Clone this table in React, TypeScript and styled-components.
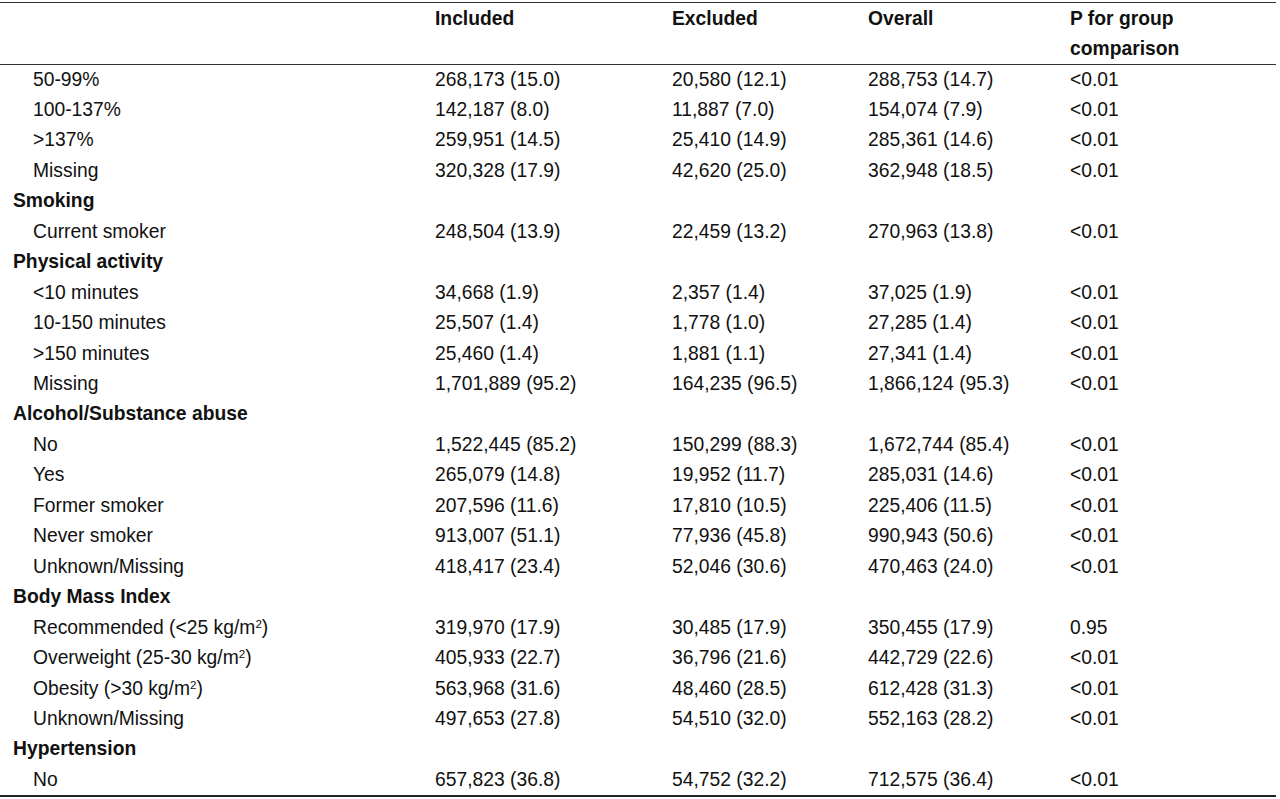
import React from "react";
import styled, { createGlobalStyle } from "styled-components";

const Global = createGlobalStyle`
  html, body { margin: 0; padding: 0; background: #fff; }
  body { font-family: "Liberation Sans", Arial, sans-serif; color: #111; }
`;

const Table = styled.div`
  width: 1276px;
  margin-top: 1.5px;
  border-top: 1.5px solid #333;
  border-bottom: 2px solid #222;
  font-size: 19.3px;
`;

const Grid = styled.div<{ $head?: boolean }>`
  display: grid;
  grid-template-columns: 435px 237px 196px 202px 1fr;
  line-height: ${(p) => (p.$head ? "30px" : "30.45px")};
  ${(p) => (p.$head ? "border-bottom: 1.2px solid #333; font-weight: bold; padding-top: 1px;" : "")}
`;

const HeadCell = styled.div`
  padding: 0;
  white-space: pre-line;
`;

const Label = styled.div<{ $group?: boolean }>`
  padding-left: ${(p) => (p.$group ? "13px" : "33px")};
  font-weight: ${(p) => (p.$group ? "bold" : "normal")};
  white-space: nowrap;
`;

const Cell = styled.div`
  white-space: nowrap;
`;

const Sup = styled.sup`
  font-size: 0.6em;
  line-height: 0;
  vertical-align: 0.55em;
`;

type Row = { label: React.ReactNode; group?: boolean; v?: [string, string, string, string] };

const kg = (pre: string) => (
  <>
    {pre}
    <Sup>2</Sup>)
  </>
);

const rows: Row[] = [
  { label: "50-99%", v: ["268,173 (15.0)", "20,580 (12.1)", "288,753 (14.7)", "<0.01"] },
  { label: "100-137%", v: ["142,187 (8.0)", "11,887 (7.0)", "154,074 (7.9)", "<0.01"] },
  { label: ">137%", v: ["259,951 (14.5)", "25,410 (14.9)", "285,361 (14.6)", "<0.01"] },
  { label: "Missing", v: ["320,328 (17.9)", "42,620 (25.0)", "362,948 (18.5)", "<0.01"] },
  { label: "Smoking", group: true },
  { label: "Current smoker", v: ["248,504 (13.9)", "22,459 (13.2)", "270,963 (13.8)", "<0.01"] },
  { label: "Physical activity", group: true },
  { label: "<10 minutes", v: ["34,668 (1.9)", "2,357 (1.4)", "37,025 (1.9)", "<0.01"] },
  { label: "10-150 minutes", v: ["25,507 (1.4)", "1,778 (1.0)", "27,285 (1.4)", "<0.01"] },
  { label: ">150 minutes", v: ["25,460 (1.4)", "1,881 (1.1)", "27,341 (1.4)", "<0.01"] },
  { label: "Missing", v: ["1,701,889 (95.2)", "164,235 (96.5)", "1,866,124 (95.3)", "<0.01"] },
  { label: "Alcohol/Substance abuse", group: true },
  { label: "No", v: ["1,522,445 (85.2)", "150,299 (88.3)", "1,672,744 (85.4)", "<0.01"] },
  { label: "Yes", v: ["265,079 (14.8)", "19,952 (11.7)", "285,031 (14.6)", "<0.01"] },
  { label: "Former smoker", v: ["207,596 (11.6)", "17,810 (10.5)", "225,406 (11.5)", "<0.01"] },
  { label: "Never smoker", v: ["913,007 (51.1)", "77,936 (45.8)", "990,943 (50.6)", "<0.01"] },
  { label: "Unknown/Missing", v: ["418,417 (23.4)", "52,046 (30.6)", "470,463 (24.0)", "<0.01"] },
  { label: "Body Mass Index", group: true },
  { label: kg("Recommended (<25 kg/m"), v: ["319,970 (17.9)", "30,485 (17.9)", "350,455 (17.9)", "0.95"] },
  { label: kg("Overweight (25-30 kg/m"), v: ["405,933 (22.7)", "36,796 (21.6)", "442,729 (22.6)", "<0.01"] },
  { label: kg("Obesity (>30 kg/m"), v: ["563,968 (31.6)", "48,460 (28.5)", "612,428 (31.3)", "<0.01"] },
  { label: "Unknown/Missing", v: ["497,653 (27.8)", "54,510 (32.0)", "552,163 (28.2)", "<0.01"] },
  { label: "Hypertension", group: true },
  { label: "No", v: ["657,823 (36.8)", "54,752 (32.2)", "712,575 (36.4)", "<0.01"] },
];

export default function App() {
  return (
    <>
      <Global />
      <Table>
        <Grid $head>
          <HeadCell />
          <HeadCell>Included</HeadCell>
          <HeadCell>Excluded</HeadCell>
          <HeadCell>Overall</HeadCell>
          <HeadCell>{"P for group\ncomparison"}</HeadCell>
        </Grid>
        {rows.map((r, i) => (
          <Grid key={i}>
            <Label $group={r.group}>{r.label}</Label>
            <Cell>{r.v?.[0]}</Cell>
            <Cell>{r.v?.[1]}</Cell>
            <Cell>{r.v?.[2]}</Cell>
            <Cell>{r.v?.[3]}</Cell>
          </Grid>
        ))}
      </Table>
    </>
  );
}
